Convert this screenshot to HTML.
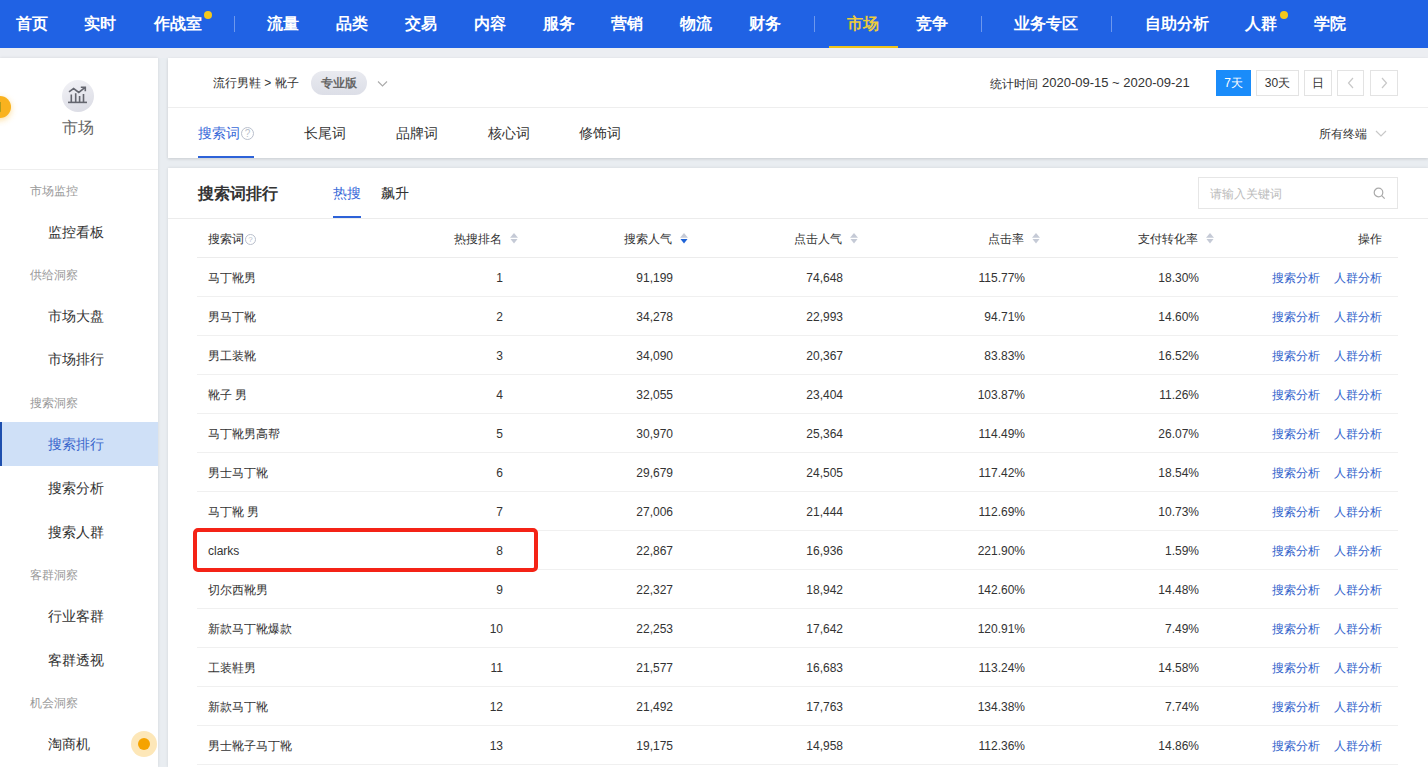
<!DOCTYPE html>
<html><head><meta charset="utf-8">
<style>
*{box-sizing:border-box;margin:0;padding:0}
html,body{width:1428px;height:767px;overflow:hidden}
body{position:relative;background:#e9edf1;font-family:"Liberation Sans",sans-serif;color:#333}
.a{position:absolute;white-space:nowrap}
#nav{position:absolute;left:0;top:0;width:1428px;height:48px;background:#2062e4}
#nav .it{position:absolute;top:0;height:48px;line-height:47px;font-size:16px;color:#fff;font-weight:bold;white-space:nowrap}
#nav .dv{position:absolute;top:16px;width:1px;height:16px;background:rgba(255,255,255,.35)}
#nav .dot{position:absolute;width:8px;height:8px;border-radius:50%;background:#f4c81c}
#nav .ul{position:absolute;left:829px;top:46px;width:69px;height:2px;background:#f0c419}
#side{position:absolute;left:0;top:58px;width:158px;height:709px;background:#fff;box-shadow:0 0 3px rgba(0,0,0,.10)}
#p1{position:absolute;left:168px;top:58px;width:1260px;height:100px;background:#fff;box-shadow:0 1px 3px rgba(0,0,0,.14)}
#p2{position:absolute;left:168px;top:168px;width:1260px;height:599px;background:#fff;box-shadow:0 0 3px rgba(0,0,0,.10)}
#band{position:absolute;left:0;top:48px;width:1428px;height:10px;background:#eceef2}
.hl{position:absolute;height:1px;background:#ebebeb}
.grp{position:absolute;left:30px;font-size:12px;line-height:20px;color:#999;white-space:nowrap}
.itm{position:absolute;left:48px;font-size:14px;line-height:20px;color:#333;white-space:nowrap}
.btn{position:absolute;top:70px;height:26px;border:1px solid #e3e3e3;background:#fff;font-size:12px;line-height:24px;text-align:center;color:#333}
.tab{position:absolute;top:123px;font-size:14px;line-height:20px;color:#333;white-space:nowrap}
.help{display:inline-block;width:13px;height:13px;border:1px solid #b9bfcc;border-radius:50%;font-size:10px;line-height:11px;text-align:center;color:#b9bfcc;vertical-align:1px;margin-left:1px}
.th{position:absolute;top:229px;font-size:12px;line-height:20px;color:#333;white-space:nowrap}
.sort{position:absolute;top:233px;width:8px;height:11px}
.tr{position:absolute;left:0;top:0;width:1428px;height:39px}
.tr span{position:absolute;top:11px;font-size:12px;line-height:20px;white-space:nowrap;color:#333}
.tr::after{content:"";position:absolute;left:197px;width:1201px;top:39px;height:1px;background:#f0f0f0}
.c0{left:208px}
.c1{right:925px}
.c2{right:755px}
.c3{right:585px}
.c4{right:403px}
.c5{right:229px}
.tr .lk{color:#3464cc}
.l1{left:1272px}
.l2{left:1334px}
</style></head><body>
<div id="nav">
 <div class="it" style="left:16px">首页</div>
 <div class="it" style="left:84px">实时</div>
 <div class="it" style="left:154px">作战室</div>
 <div class="dot" style="left:204px;top:11px"></div>
 <div class="dv" style="left:234px"></div>
 <div class="it" style="left:267px">流量</div>
 <div class="it" style="left:336px">品类</div>
 <div class="it" style="left:405px">交易</div>
 <div class="it" style="left:474px">内容</div>
 <div class="it" style="left:543px">服务</div>
 <div class="it" style="left:611px">营销</div>
 <div class="it" style="left:680px">物流</div>
 <div class="it" style="left:749px">财务</div>
 <div class="dv" style="left:814px"></div>
 <div class="it" style="left:847px;color:#eccb3c">市场</div>
 <div class="ul"></div>
 <div class="it" style="left:916px">竞争</div>
 <div class="dv" style="left:981px"></div>
 <div class="it" style="left:1014px">业务专区</div>
 <div class="dv" style="left:1111px"></div>
 <div class="it" style="left:1145px">自助分析</div>
 <div class="it" style="left:1245px">人群</div>
 <div class="dot" style="left:1280px;top:11px"></div>
 <div class="it" style="left:1314px">学院</div>
</div>
<div id="band"></div>
<div id="side"></div>
<div id="p1"></div>
<div id="p2"></div>

<!-- sidebar content -->
<div class="a" style="left:-30px;top:96px;width:41px;height:22px;border-radius:11px;background:#f9b21e;box-shadow:0 2px 6px rgba(249,178,30,.45)"></div>
<div class="a" style="left:-11px;top:99px;font-size:12px;line-height:16px;color:#4a2a00">期</div>
<div class="a" style="left:62px;top:80px;width:32px;height:32px;border-radius:50%;background:linear-gradient(160deg,#f3f3f7,#d9dae3)"></div>
<svg class="a" style="left:62px;top:80px" width="32" height="32" viewBox="0 0 32 32">
 <path d="M6 22.4h19" stroke="#64666f" stroke-width="1.6" fill="none"/>
 <path d="M9.3 22v-7.5M13.7 22v-8.8M17.6 22v-6M21.5 22v-8" stroke="#64666f" stroke-width="1.6" fill="none"/>
 <path d="M7 11.8l4.6-3.3 5.2 3.9 6.3-5M18.8 7.2h4.5v4" stroke="#64666f" stroke-width="1.6" fill="none"/>
</svg>
<div class="a" style="left:62px;top:118px;font-size:16px;line-height:20px;color:#666">市场</div>
<div class="hl" style="left:0;top:169px;width:158px;background:#eee"></div>
<div class="grp" style="top:181px">市场监控</div>
<div class="itm" style="top:222px">监控看板</div>
<div class="grp" style="top:265px">供给洞察</div>
<div class="itm" style="top:306px">市场大盘</div>
<div class="itm" style="top:349px">市场排行</div>
<div class="grp" style="top:393px">搜索洞察</div>
<div class="a" style="left:0;top:422px;width:158px;height:44px;background:#cfe0f7;border-left:2px solid #1e4fae"></div>
<div class="itm" style="top:434px;color:#3a66cc">搜索排行</div>
<div class="itm" style="top:478px">搜索分析</div>
<div class="itm" style="top:522px">搜索人群</div>
<div class="grp" style="top:565px">客群洞察</div>
<div class="itm" style="top:606px">行业客群</div>
<div class="itm" style="top:650px">客群透视</div>
<div class="grp" style="top:693px">机会洞察</div>
<div class="itm" style="top:734px">淘商机</div>
<div class="a" style="left:131px;top:731px;width:26px;height:26px;border-radius:50%;background:#fde7b8"></div>
<div class="a" style="left:138px;top:738px;width:12px;height:12px;border-radius:50%;background:#f5a300"></div>

<!-- panel 1 -->
<div class="a" style="left:213px;top:74px;font-size:12px;line-height:18px;color:#333">流行男鞋 &gt; 靴子</div>
<div class="a" style="left:311px;top:71px;width:56px;height:24px;border-radius:12px;background:linear-gradient(180deg,#e9eaf0,#dcdee7);font-size:12px;line-height:24px;text-align:center;color:#666;font-weight:bold">专业版</div>
<svg class="a" style="left:377px;top:80px" width="11" height="8" viewBox="0 0 11 8"><path d="M1 1.5l4.5 4.5 4.5-4.5" stroke="#aaa" stroke-width="1.1" fill="none"/></svg>
<div class="a" style="left:990px;top:75px;font-size:12px;line-height:18px;color:#333">统计时间</div><div class="a" style="left:1042px;top:74px;font-size:13px;line-height:18px;color:#333">2020-09-15 ~ 2020-09-21</div>
<div class="btn" style="left:1216px;width:35px;background:#1a8cfa;border-color:#1a8cfa;color:#fff">7天</div>
<div class="btn" style="left:1256px;width:43px">30天</div>
<div class="btn" style="left:1304px;width:28px">日</div>
<div class="btn" style="left:1337px;width:27px"><svg width="8" height="12" viewBox="0 0 8 12" style="position:absolute;left:9px;top:6px"><path d="M6 1L1.5 6 6 11" stroke="#c8c8c8" stroke-width="1.2" fill="none"/></svg></div>
<div class="btn" style="left:1370px;width:28px"><svg width="8" height="12" viewBox="0 0 8 12" style="position:absolute;left:9px;top:6px"><path d="M2 1l4.5 5L2 11" stroke="#c8c8c8" stroke-width="1.2" fill="none"/></svg></div>
<div class="hl" style="left:168px;top:107px;width:1260px;background:#eee"></div>
<div class="tab" style="left:198px;color:#3a6bd9">搜索词<span class="help">?</span></div>
<div class="tab" style="left:304px">长尾词</div>
<div class="tab" style="left:396px">品牌词</div>
<div class="tab" style="left:488px">核心词</div>
<div class="tab" style="left:579px">修饰词</div>
<div class="a" style="left:198px;top:156px;width:56px;height:2px;background:#2d62d8"></div>
<div class="a" style="left:1319px;top:125px;font-size:12px;line-height:18px;color:#333">所有终端</div>
<svg class="a" style="left:1375px;top:129px" width="12" height="9" viewBox="0 0 12 9"><path d="M1 2l5 5 5-5" stroke="#c8c8c8" stroke-width="1.2" fill="none"/></svg>

<!-- panel 2 -->
<div class="a" style="left:198px;top:183px;font-size:16px;line-height:22px;color:#333;font-weight:bold">搜索词排行</div>
<div class="a" style="left:333px;top:183px;font-size:14px;line-height:20px;color:#3a6bd9">热搜</div>
<div class="a" style="left:333px;top:216px;width:28px;height:2px;background:#2d62d8"></div>
<div class="a" style="left:381px;top:183px;font-size:14px;line-height:20px;color:#333">飙升</div>
<div class="a" style="left:1198px;top:177px;width:200px;height:32px;border:1px solid #e6e6e6;background:#fff"></div>
<div class="a" style="left:1210px;top:185px;font-size:12px;line-height:18px;color:#bbb">请输入关键词</div>
<svg class="a" style="left:1373px;top:187px" width="13" height="13" viewBox="0 0 13 13"><circle cx="5.5" cy="5.5" r="4.3" stroke="#aaa" stroke-width="1.2" fill="none"/><path d="M8.7 8.7l3 3" stroke="#aaa" stroke-width="1.2"/></svg>
<div class="hl" style="left:168px;top:218px;width:1260px;background:#ececec"></div>
<div class="th" style="left:208px">搜索词<span class="help" style="width:11px;height:11px;font-size:8px;line-height:9px">?</span></div>
<div class="th" style="left:454px">热搜排名</div>
<div class="th" style="left:624px">搜索人气</div>
<div class="th" style="left:794px">点击人气</div>
<div class="th" style="left:988px">点击率</div>
<div class="th" style="left:1138px">支付转化率</div>
<div class="th" style="left:1358px">操作</div>
<svg class="sort" style="left:510px" viewBox="0 0 8 11"><path d="M4 0L8 4.7H0z" fill="#c5cad6"/><path d="M4 10.5L7.5 6H0.5z" fill="#c5cad6"/></svg>
<svg class="sort" style="left:680px" viewBox="0 0 8 11"><path d="M4 0L8 4.7H0z" fill="#c5cad6"/><path d="M4 10.5L7.5 6H0.5z" fill="#1e62d6"/></svg>
<svg class="sort" style="left:850px" viewBox="0 0 8 11"><path d="M4 0L8 4.7H0z" fill="#c5cad6"/><path d="M4 10.5L7.5 6H0.5z" fill="#c5cad6"/></svg>
<svg class="sort" style="left:1032px" viewBox="0 0 8 11"><path d="M4 0L8 4.7H0z" fill="#c5cad6"/><path d="M4 10.5L7.5 6H0.5z" fill="#c5cad6"/></svg>
<svg class="sort" style="left:1206px" viewBox="0 0 8 11"><path d="M4 0L8 4.7H0z" fill="#c5cad6"/><path d="M4 10.5L7.5 6H0.5z" fill="#c5cad6"/></svg>
<div class="hl" style="left:197px;top:257px;width:1201px;background:#ececec"></div>
<div class="tr" style="top:257px"><span class="c0">马丁靴男</span><span class="c1">1</span><span class="c2">91,199</span><span class="c3">74,648</span><span class="c4">115.77%</span><span class="c5">18.30%</span><span class="lk l1">搜索分析</span><span class="lk l2">人群分析</span></div>
<div class="tr" style="top:296px"><span class="c0">男马丁靴</span><span class="c1">2</span><span class="c2">34,278</span><span class="c3">22,993</span><span class="c4">94.71%</span><span class="c5">14.60%</span><span class="lk l1">搜索分析</span><span class="lk l2">人群分析</span></div>
<div class="tr" style="top:335px"><span class="c0">男工装靴</span><span class="c1">3</span><span class="c2">34,090</span><span class="c3">20,367</span><span class="c4">83.83%</span><span class="c5">16.52%</span><span class="lk l1">搜索分析</span><span class="lk l2">人群分析</span></div>
<div class="tr" style="top:374px"><span class="c0">靴子 男</span><span class="c1">4</span><span class="c2">32,055</span><span class="c3">23,404</span><span class="c4">103.87%</span><span class="c5">11.26%</span><span class="lk l1">搜索分析</span><span class="lk l2">人群分析</span></div>
<div class="tr" style="top:413px"><span class="c0">马丁靴男高帮</span><span class="c1">5</span><span class="c2">30,970</span><span class="c3">25,364</span><span class="c4">114.49%</span><span class="c5">26.07%</span><span class="lk l1">搜索分析</span><span class="lk l2">人群分析</span></div>
<div class="tr" style="top:452px"><span class="c0">男士马丁靴</span><span class="c1">6</span><span class="c2">29,679</span><span class="c3">24,505</span><span class="c4">117.42%</span><span class="c5">18.54%</span><span class="lk l1">搜索分析</span><span class="lk l2">人群分析</span></div>
<div class="tr" style="top:491px"><span class="c0">马丁靴 男</span><span class="c1">7</span><span class="c2">27,006</span><span class="c3">21,444</span><span class="c4">112.69%</span><span class="c5">10.73%</span><span class="lk l1">搜索分析</span><span class="lk l2">人群分析</span></div>
<div class="tr" style="top:530px"><span class="c0">clarks</span><span class="c1">8</span><span class="c2">22,867</span><span class="c3">16,936</span><span class="c4">221.90%</span><span class="c5">1.59%</span><span class="lk l1">搜索分析</span><span class="lk l2">人群分析</span></div>
<div class="tr" style="top:569px"><span class="c0">切尔西靴男</span><span class="c1">9</span><span class="c2">22,327</span><span class="c3">18,942</span><span class="c4">142.60%</span><span class="c5">14.48%</span><span class="lk l1">搜索分析</span><span class="lk l2">人群分析</span></div>
<div class="tr" style="top:608px"><span class="c0">新款马丁靴爆款</span><span class="c1">10</span><span class="c2">22,253</span><span class="c3">17,642</span><span class="c4">120.91%</span><span class="c5">7.49%</span><span class="lk l1">搜索分析</span><span class="lk l2">人群分析</span></div>
<div class="tr" style="top:647px"><span class="c0">工装鞋男</span><span class="c1">11</span><span class="c2">21,577</span><span class="c3">16,683</span><span class="c4">113.24%</span><span class="c5">14.58%</span><span class="lk l1">搜索分析</span><span class="lk l2">人群分析</span></div>
<div class="tr" style="top:686px"><span class="c0">新款马丁靴</span><span class="c1">12</span><span class="c2">21,492</span><span class="c3">17,763</span><span class="c4">134.38%</span><span class="c5">7.74%</span><span class="lk l1">搜索分析</span><span class="lk l2">人群分析</span></div>
<div class="tr" style="top:725px"><span class="c0">男士靴子马丁靴</span><span class="c1">13</span><span class="c2">19,175</span><span class="c3">14,958</span><span class="c4">112.36%</span><span class="c5">14.86%</span><span class="lk l1">搜索分析</span><span class="lk l2">人群分析</span></div>
<div class="a" style="left:193px;top:528px;width:345px;height:44px;border:4px solid #f42316;border-radius:5px"></div>
</body></html>
